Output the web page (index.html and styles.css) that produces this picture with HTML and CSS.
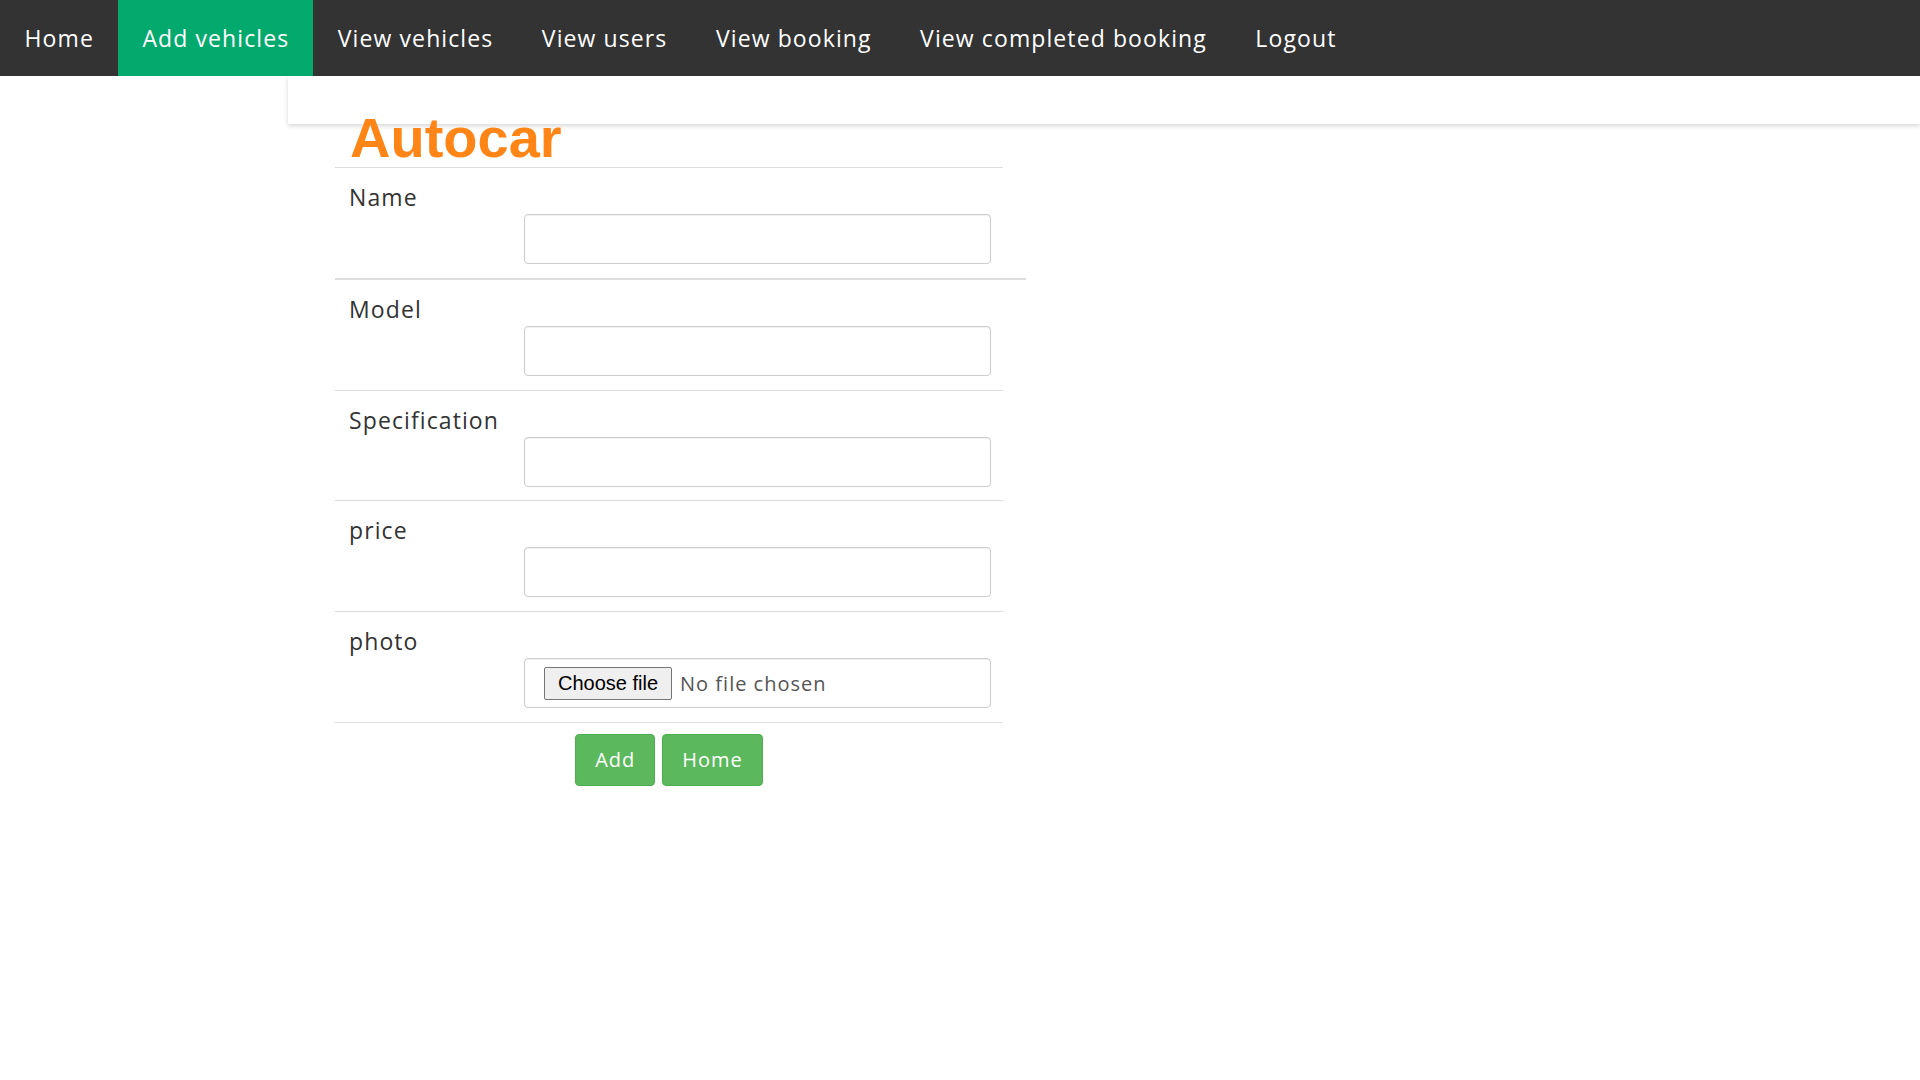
FILE: index.html
```html
<!DOCTYPE html>
<html lang="en">
<head>
<meta charset="utf-8">
<title>Add vehicles</title>
<link rel="stylesheet" href="styles.css">
</head>
<body>
<nav class="topnav">
  <a href="#" class="nav-link">Home</a>
  <a href="#" class="nav-link active">Add vehicles</a>
  <a href="#" class="nav-link">View vehicles</a>
  <a href="#" class="nav-link">View users</a>
  <a href="#" class="nav-link">View booking</a>
  <a href="#" class="nav-link">View completed booking</a>
  <a href="#" class="nav-link">Logout</a>
</nav>
<div class="header-panel"></div>
<main class="form-wrap">
  <h1 class="title">Autocar</h1>
  <div class="row row-first">
    <div class="label">Name</div>
    <div class="field"><span class="input"></span></div>
  </div>
  <div class="row">
    <div class="label">Model</div>
    <div class="field"><span class="input"></span></div>
  </div>
  <div class="row">
    <div class="label">Specification</div>
    <div class="field"><span class="input"></span></div>
  </div>
  <div class="row">
    <div class="label">price</div>
    <div class="field"><span class="input"></span></div>
  </div>
  <div class="row">
    <div class="label">photo</div>
    <div class="field"><span class="input file-input"><span class="file-btn">Choose file</span><span class="file-text">No file chosen</span></span></div>
  </div>
  <div class="actions">
    <button class="btn">Add</button>
    <button class="btn">Home</button>
  </div>
</main>
</body>
</html>
```

FILE: styles.css
```css
html, body {
  margin: 0;
  padding: 0;
  background: #fff;
}
body {
  font-family: "Open Sans", "Liberation Sans", sans-serif;
  color: #333;
}
.topnav {
  display: flex;
  height: 76px;
  background: #333;
}
.nav-link {
  display: block;
  padding: 0 24px 0 24.5px;
  line-height: 76px;
  color: #fff;
  text-decoration: none;
  font-size: 23px;
  letter-spacing: 1.1px;
}
.nav-link.active {
  background: #04aa6d;
}
.header-panel {
  margin-left: 288px;
  height: 48px;
  background: #fff;
  box-shadow: 0 2px 5px rgba(0, 0, 0, 0.16);
}
.form-wrap {
  margin-left: 335px;
  width: 668px;
}
.title {
  position: relative;
  margin: -15px 0 0 0;
  padding-left: 15px;
  font-family: "Liberation Sans", Arial, sans-serif;
  font-weight: bold;
  font-size: 56px;
  line-height: 58px;
  color: #ff8616;
  border-bottom: 1px solid #ddd;
}
.row {
  padding: 14px 0 13.8px 14px;
  border-bottom: 1px solid #ddd;
}
.row-first {
  margin-right: -23px;
  border-bottom-width: 2px;
}
.label {
  font-size: 23px;
  letter-spacing: 1.1px;
  line-height: 30px;
  margin-bottom: 2px;
}
.field {
  padding-left: 175px;
}
.input {
  display: flex;
  align-items: center;
  box-sizing: border-box;
  width: 467px;
  height: 50px;
  border: 1px solid #ccc;
  border-radius: 4px;
  box-shadow: inset 0 1px 1px rgba(0, 0, 0, 0.06);
}
.file-input {
  padding-left: 19px;
}
.file-btn {
  box-sizing: border-box;
  height: 33px;
  padding: 0 13px;
  line-height: 31px;
  font-family: "Liberation Sans", Arial, sans-serif;
  font-size: 20px;
  color: #000;
  background: #efefef;
  border: 1px solid #767676;
  border-radius: 2px;
}
.file-text {
  margin-left: 8px;
  font-size: 20px;
  letter-spacing: 1px;
  color: #555;
}
.actions {
  display: flex;
  justify-content: center;
  gap: 7px;
  padding-top: 11px;
}
.btn {
  height: 52px;
  padding: 0 19px;
  font-family: "Open Sans", "Liberation Sans", sans-serif;
  font-size: 20px;
  letter-spacing: 1px;
  color: #fff;
  background: #5cb85c;
  border: 1px solid #4cae4c;
  border-radius: 4px;
}
```
